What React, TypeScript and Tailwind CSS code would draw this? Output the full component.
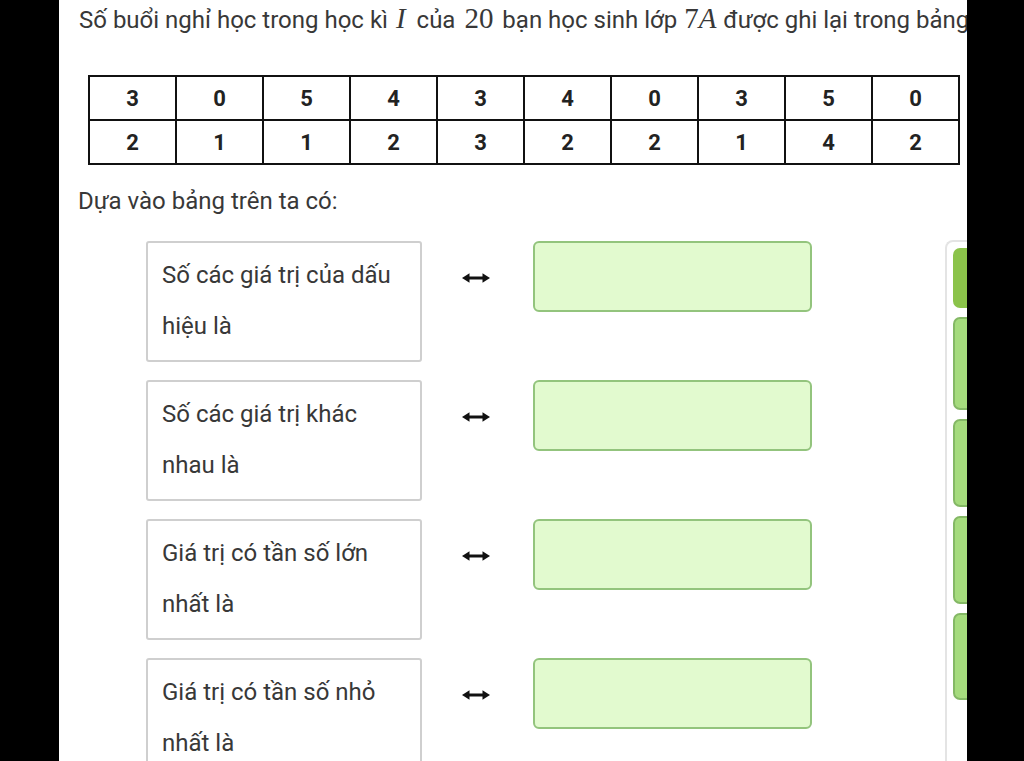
import React from "react";

const row1 = [3, 0, 5, 4, 3, 4, 0, 3, 5, 0];
const row2 = [2, 1, 1, 2, 3, 2, 2, 1, 4, 2];

const items: string[][] = [
  ["Số các giá trị của dấu", "hiệu là"],
  ["Số các giá trị khác", "nhau là"],
  ["Giá trị có tần số lớn", "nhất là"],
  ["Giá trị có tần số nhỏ", "nhất là"],
];

function Arrow() {
  return (
    <svg width="28" height="12" viewBox="0 0 28 12" className="block">
      <line x1="5" y1="6" x2="23" y2="6" stroke="#111" strokeWidth="3" />
      <polygon points="0,6 7.5,1.2 7.5,10.8" fill="#111" />
      <polygon points="28,6 20.5,1.2 20.5,10.8" fill="#111" />
    </svg>
  );
}

const serif = { fontFamily: '"Liberation Serif", "DejaVu Serif", serif' };

export default function App() {
  return (
    <div
      className="flex h-[761px] w-[1024px] overflow-hidden bg-black"
      style={{ fontFamily: 'Roboto, "Noto Sans", Arial, sans-serif' }}
    >
      <div className="w-[59px] shrink-0 bg-black" />
      <div className="relative w-[908px] shrink-0 overflow-hidden bg-white">
        <div className="h-[38px] w-[1000px] whitespace-nowrap pl-[20px] pt-[2px] text-[24px] leading-[36px] text-[#383838]">
          Số buổi nghỉ học trong học kì{" "}
          <span className="pl-[2px] pr-[5px] text-[29px] italic leading-[20px]" style={serif}>I</span> của{" "}
          <span className="px-[3px] text-[29px] leading-[20px]" style={serif}>20</span> bạn học sinh lớp{" "}
          <span className="px-[1px] text-[29px] leading-[20px]" style={serif}>
            7<span className="italic">A</span>
          </span>{" "}
          được ghi lại trong bảng
        </div>

        <table className="ml-[29px] mt-[37px] w-[872px] table-fixed border-collapse">
          <tbody>
            {[row1, row2].map((r, i) => (
              <tr key={i}>
                {r.map((v, j) => (
                  <td
                    key={j}
                    className="h-[44px] border-2 border-[#111] text-center align-middle text-[22px] font-bold text-[#222]"
                  >
                    {v}
                  </td>
                ))}
              </tr>
            ))}
          </tbody>
        </table>

        <div className="mt-[18px] pl-[19px] text-[24px] leading-[36px] text-[#383838]">
          Dựa vào bảng trên ta có:
        </div>

        <div className="mt-[21px] flex items-start">
          <div className="ml-[87px] flex w-[666px] shrink-0 flex-col gap-[18px] pt-[1px]">
            {items.map((t, i) => (
              <div key={i} className="flex h-[121px] items-start">
                <div className="h-[121px] w-[276px] shrink-0 rounded-[3px] border-2 border-[#cfcfcf] px-[14px] pt-[7px] text-[24px] leading-[51px] text-[#383838]">
                  <div>{t[0]}</div>
                  <div>{t[1]}</div>
                </div>
                <div className="ml-[40px] mt-[31px] shrink-0">
                  <Arrow />
                </div>
                <div className="ml-[43px] h-[71px] w-[279px] shrink-0 rounded-[6px] border-2 border-[#93c47d] bg-[#e2facf]" />
              </div>
            ))}
          </div>
          <div className="ml-[133px] flex h-[600px] w-[60px] shrink-0 flex-col gap-[9px] rounded-tl-[8px] border-l-2 border-t-2 border-[#e4e4e4] pl-[6px] pt-[6px]">
            <div className="h-[60px] shrink-0 rounded-l-[7px] bg-[#8bc34a]" />
            <div className="h-[93px] shrink-0 rounded-l-[7px] border-2 border-[#84b865] bg-[#a5db7d]" />
            <div className="h-[88px] shrink-0 rounded-l-[7px] border-2 border-[#84b865] bg-[#a5db7d]" />
            <div className="h-[88px] shrink-0 rounded-l-[7px] border-2 border-[#84b865] bg-[#a5db7d]" />
            <div className="h-[87px] shrink-0 rounded-l-[7px] border-2 border-[#84b865] bg-[#a5db7d]" />
          </div>
        </div>
      </div>
      <div className="w-[57px] shrink-0 bg-black" />
    </div>
  );
}
